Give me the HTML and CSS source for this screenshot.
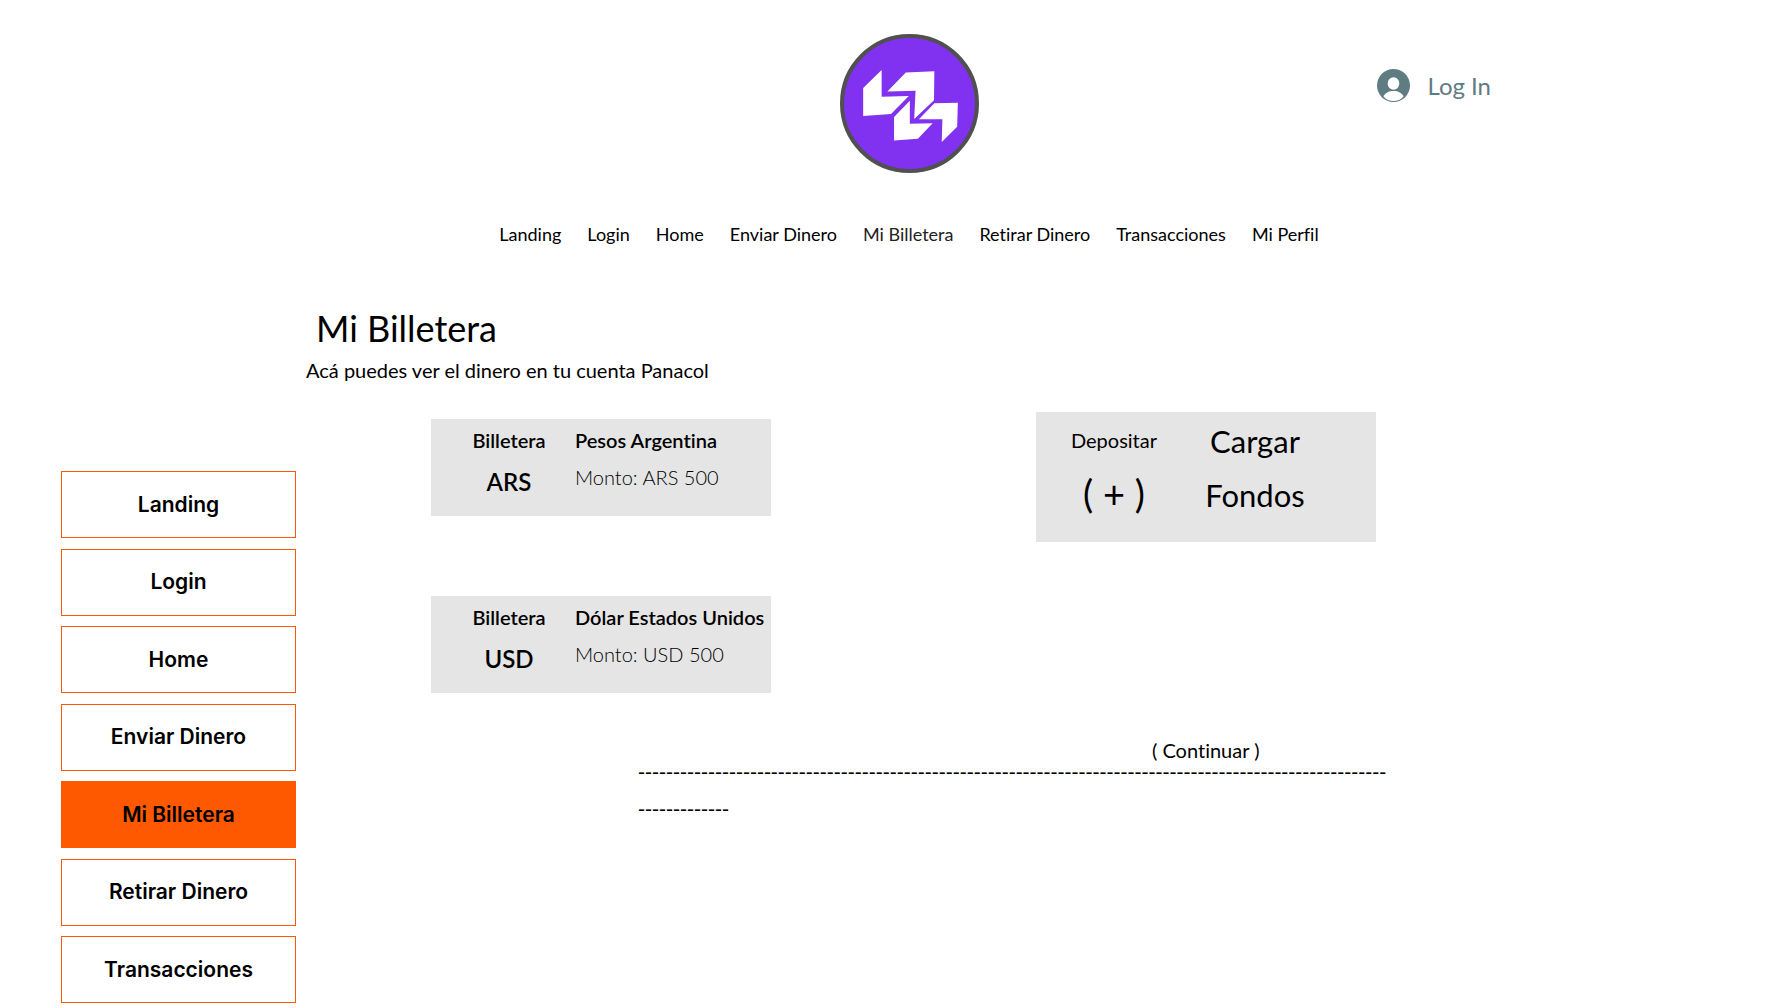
FILE: index.html
```html
<!DOCTYPE html>
<html lang="es">
<head>
<meta charset="utf-8">
<meta name="viewport" content="width=device-width, initial-scale=1">
<title>Mi Billetera</title>
<link rel="stylesheet" href="styles.css">
</head>
<body>
<header class="header">
  <div class="topbar">
    <a class="logo" href="#" aria-label="Panacol">
      <svg viewBox="60 44 414 414" aria-hidden="true">
        <circle cx="267" cy="251" r="201" fill="#8132f0" stroke="#505050" stroke-width="12"/>
        <g fill="#fff">
          <path d="M129 205 184 151V231L265 229 212 282 129 288Z"/>
          <path d="M201 215 256 159 341 155 340 241 281 297 285 213Z"/>
          <path d="M221 291 268 243V311L336 310 292 356 221 361Z"/>
          <path d="M295 298 341 250 411 249 409 320 363 366 365 298Z"/>
        </g>
      </svg>
    </a>
    <button class="login" type="button">
      <svg class="login-icon" viewBox="0 0 33 33" aria-hidden="true">
        <circle cx="16.500" cy="16.500" r="16.500" fill="#5f7c83"/>
        <ellipse cx="16.500" cy="14.500" rx="5.800" ry="6.200" fill="#fff"/>
        <path d="M6.500 27.500C8 24 11.500 22 16.500 22s8.500 2 10 5.500C24 30.500 20.500 32 16.500 32S9 30.500 6.500 27.500Z" fill="#fff"/>
      </svg>
      <span>Log In</span>
    </button>
  </div>
  <nav class="nav" aria-label="Principal">
    <a href="#">Landing</a>
    <a href="#">Login</a>
    <a href="#">Home</a>
    <a href="#">Enviar Dinero</a>
    <a class="current" href="#" aria-current="page">Mi Billetera</a>
    <a href="#">Retirar Dinero</a>
    <a href="#">Transacciones</a>
    <a href="#">Mi Perfil</a>
  </nav>
</header>
<div class="layout">
  <nav class="sidebar" aria-label="Secciones">
    <a href="#">Landing</a>
    <a href="#">Login</a>
    <a href="#">Home</a>
    <a href="#">Enviar Dinero</a>
    <a class="active" href="#" aria-current="page">Mi Billetera</a>
    <a href="#">Retirar Dinero</a>
    <a href="#">Transacciones</a>
  </nav>
  <main class="main">
    <h1>Mi Billetera</h1>
    <p class="intro">Acá puedes ver el dinero en tu cuenta Panacol</p>
    <div class="cards">
      <div class="wallets">
        <section class="card">
          <div class="col">
            <p class="label">Billetera</p>
            <p class="code">ARS</p>
          </div>
          <div>
            <h2 class="label">Pesos Argentina</h2>
            <p class="amount">Monto: ARS 500</p>
          </div>
        </section>
        <section class="card">
          <div class="col">
            <p class="label">Billetera</p>
            <p class="code">USD</p>
          </div>
          <div>
            <h2 class="label">Dólar Estados Unidos</h2>
            <p class="amount">Monto: USD 500</p>
          </div>
        </section>
      </div>
      <button class="card deposit" type="button">
        <span class="col"><span class="deposit-label">Depositar</span><span class="plus">( + )</span></span>
        <span class="funds">Cargar<br>Fondos</span>
      </button>
    </div>
    <div class="footer">
      <a class="continue" href="#">( Continuar )</a>
      <p class="rule">------------------------------------------------------------------------------------------------------------------------</p>
    </div>
  </main>
</div>
</body>
</html>
```
FILE: styles.css
```css
* {
  box-sizing: border-box;
}

body {
  margin: 0;
  background: #fff;
  color: #000;
  font-family: Lato, "Liberation Sans", sans-serif;
  font-size: 20px;
  font-variant-ligatures: none;
  line-height: 28px;
}

h1, h2, p {
  margin: 0;
}

a {
  color: inherit;
  text-decoration: none;
}

button {
  border: 0;
  background: none;
  color: inherit;
  font: inherit;
  cursor: pointer;
}

.header {
  padding: 34px 0 0 46px;
}

.topbar {
  display: grid;
  grid-template-columns: 1fr auto 1fr;
  align-items: start;
}

.logo {
  grid-column: 2;
  width: 139px;
}

.logo svg {
  display: block;
  width: 100%;
}

.login {
  justify-self: end;
  display: flex;
  align-items: center;
  gap: 17px;
  margin: 35px 281px 0 0;
  padding: 0;
  color: #5f7c83;
  font-size: 24px;
  line-height: 32px;
}

.login-icon {
  width: 33px;
  height: 33px;
}

.nav {
  display: flex;
  justify-content: center;
  gap: 26px;
  margin-top: 47px;
  font-size: 18px;
}

.nav .current {
  color: #222;
}

.layout {
  display: flex;
  align-items: flex-start;
  gap: 10px;
  padding: 56px 61px 0;
}

.sidebar {
  flex: none;
  display: flex;
  flex-direction: column;
  justify-content: space-between;
  width: 235px;
  min-height: 532px;
  margin-top: 167px;
  font-family: Inter, "Liberation Sans", sans-serif;
  font-size: 21px;
  font-weight: 600;
}

.sidebar a {
  display: flex;
  align-items: center;
  justify-content: center;
  height: 67px;
  border: 1px solid #ff5900;
}

.sidebar .active {
  background: #ff5900;
}

.main {
  flex: 1;
  max-width: 1100px;
}

h1 {
  padding-left: 10px;
  font-size: 36px;
  font-weight: 400;
  line-height: 48px;
}

.intro {
  margin-top: 4px;
}

.cards {
  display: flex;
  justify-content: space-between;
  align-items: flex-start;
  margin: 28px 30px 0 125px;
}

.wallets {
  display: grid;
  gap: 80px;
  padding-top: 7px;
}

.card {
  display: grid;
  grid-template-columns: 132px 1fr;
  width: 340px;
  padding: 7px 0 14px 12px;
  background: #e5e5e5;
  white-space: nowrap;
}

.col {
  text-align: center;
}

.label {
  font-size: 20px;
  font-weight: 600;
  line-height: 28px;
}

.code {
  margin-top: 8px;
  font-size: 24px;
  font-weight: 600;
  line-height: 40px;
}

.amount {
  margin-top: 9px;
  font-size: 20px;
  font-weight: 300;
}

.deposit {
  grid-template-columns: 132px 150px;
  padding: 2px 0 20px 12px;
}

.deposit-label {
  display: block;
  line-height: 52px;
}

.plus {
  display: block;
  font-size: 38px;
  line-height: 54px;
}

.funds {
  font-size: 31px;
  line-height: 54px;
}

.footer {
  display: flex;
  flex-direction: column;
  align-items: flex-start;
  max-width: 1084px;
  margin-top: 45px;
  padding-left: 332px;
}

.continue {
  margin-left: 514px;
  line-height: 24px;
}

.rule {
  margin-top: -9px;
  font-family: "Liberation Sans", sans-serif;
  font-size: 21px;
  line-height: 37px;
  overflow-wrap: anywhere;
}
```
